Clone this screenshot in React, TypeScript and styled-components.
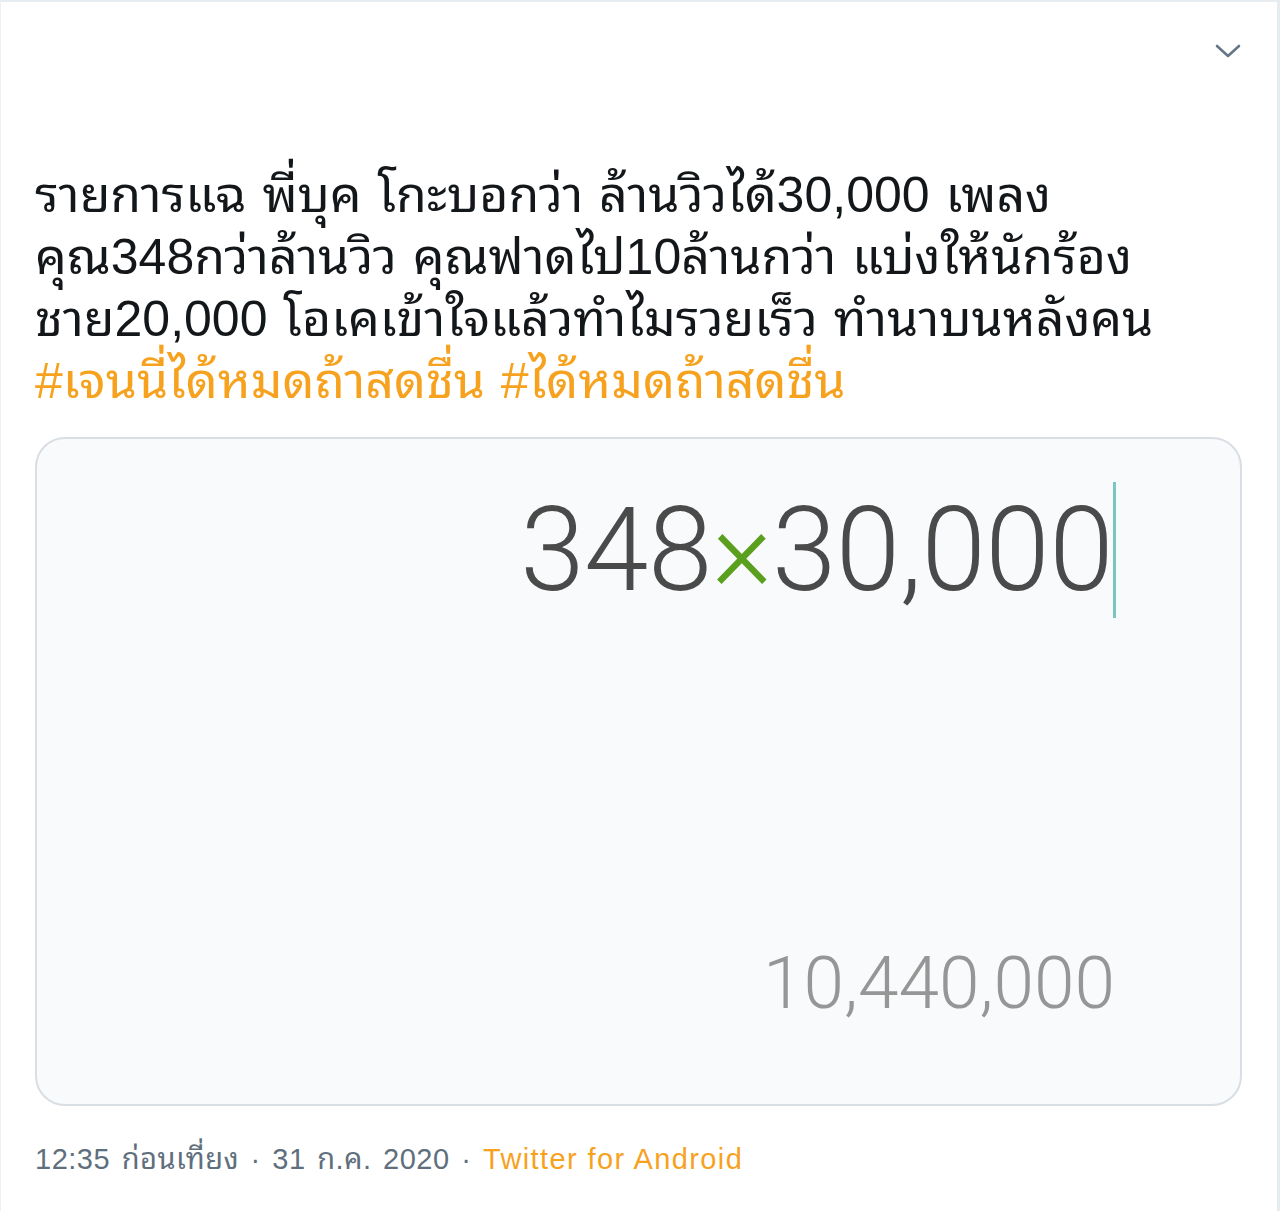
import styled, { createGlobalStyle } from 'styled-components';

const GlobalStyle = createGlobalStyle`
    html, body {
        margin: 0;
        padding: 0;
        background: #ffffff;
    }
    body {
        font-family: 'Liberation Sans', 'Noto Sans Thai Looped', Garuda, Loma, 'Tlwg Typo', 'Noto Sans Thai', 'Noto Sans', sans-serif;
    }
`;

const Tweet = styled.article`
    box-sizing: border-box;
    width: 1280px;
    height: 1211px;
    border-top: 2px solid #e6ecf0;
    border-right: 3px solid #e6ecf0;
    border-left: 1px solid #eef1f4;
    padding: 0 35px 0 34px;
    display: flex;
    flex-direction: column;
`;

const Header = styled.header`
    height: 100px;
    display: flex;
    justify-content: flex-end;
    align-items: flex-start;
    padding-top: 37px;
    box-sizing: border-box;
`;

const MenuButton = styled.button`
    border: none;
    background: none;
    padding: 0;
    margin-right: -2px;
    width: 32px;
    height: 24px;
    display: flex;
    align-items: center;
    justify-content: center;
    cursor: pointer;
`;

const Body = styled.div`
    margin-top: 62px;
    font-size: 50px;
    line-height: 62px;
    color: #14171a;
    white-space: nowrap;
    word-spacing: 2px;
`;

const Hashtag = styled.a`
    color: #f7a21f;
    text-decoration: none;
`;

const Card = styled.div`
    box-sizing: border-box;
    margin-top: 25px;
    height: 669px;
    border: 2px solid #d8dee3;
    border-radius: 30px;
    background: #f9fafb;
    display: flex;
    flex-direction: column;
    justify-content: space-between;
    padding: 43px 124px 76px 0;
    font-family: Roboto, 'Liberation Sans', sans-serif;
    font-weight: 300;
`;

const Expression = styled.div`
    display: flex;
    justify-content: flex-end;
    align-items: stretch;
    height: 136px;
`;

const ExpressionText = styled.span`
    font-size: 116px;
    line-height: 136px;
    color: #4a4a4a;
    letter-spacing: -0.5px;
`;

const Operator = styled.span`
    color: #5b9f1f;
`;

const Caret = styled.span`
    width: 3px;
    background: #7cc6c2;
`;

const Result = styled.div`
    text-align: right;
    font-size: 73px;
    line-height: 90px;
    color: #969696;
    padding-right: 1px;
`;

const Meta = styled.div`
    margin-top: 33px;
    font-size: 29px;
    line-height: 40px;
    color: #5f6f7d;
    letter-spacing: 0.5px;
    word-spacing: 3px;
`;

const Source = styled.a`
    color: #f7a21f;
    text-decoration: none;
    letter-spacing: 1.4px;
    word-spacing: 0;
`;

export default function App() {
    return (
        <>
            <GlobalStyle />
            <Tweet>
                <Header>
                    <MenuButton aria-label="More">
                        <svg width="28" height="18" viewBox="0 0 28 18" fill="none">
                            <path
                                d="M3 4 L14 14 L25 4"
                                stroke="#657786"
                                strokeWidth="2.6"
                                strokeLinecap="round"
                                strokeLinejoin="round"
                            />
                        </svg>
                    </MenuButton>
                </Header>
                <Body>
                    รายการแฉ พี่บุค โกะบอกว่า ล้านวิวได้30,000 เพลง
                    <br />
                    คุณ348กว่าล้านวิว คุณฟาดไป10ล้านกว่า แบ่งให้นักร้อง
                    <br />
                    ชาย20,000 โอเคเข้าใจแล้วทำไมรวยเร็ว ทำนาบนหลังคน
                    <br />
                    <Hashtag href="#">#เจนนี่ได้หมดถ้าสดชื่น</Hashtag>{' '}
                    <Hashtag href="#">#ได้หมดถ้าสดชื่น</Hashtag>
                </Body>
                <Card>
                    <Expression>
                        <ExpressionText>
                            348<Operator>×</Operator>30,000
                        </ExpressionText>
                        <Caret />
                    </Expression>
                    <Result>10,440,000</Result>
                </Card>
                <Meta>
                    12:35 ก่อนเที่ยง · 31 ก.ค. 2020 · <Source href="#">Twitter for Android</Source>
                </Meta>
            </Tweet>
        </>
    );
}
